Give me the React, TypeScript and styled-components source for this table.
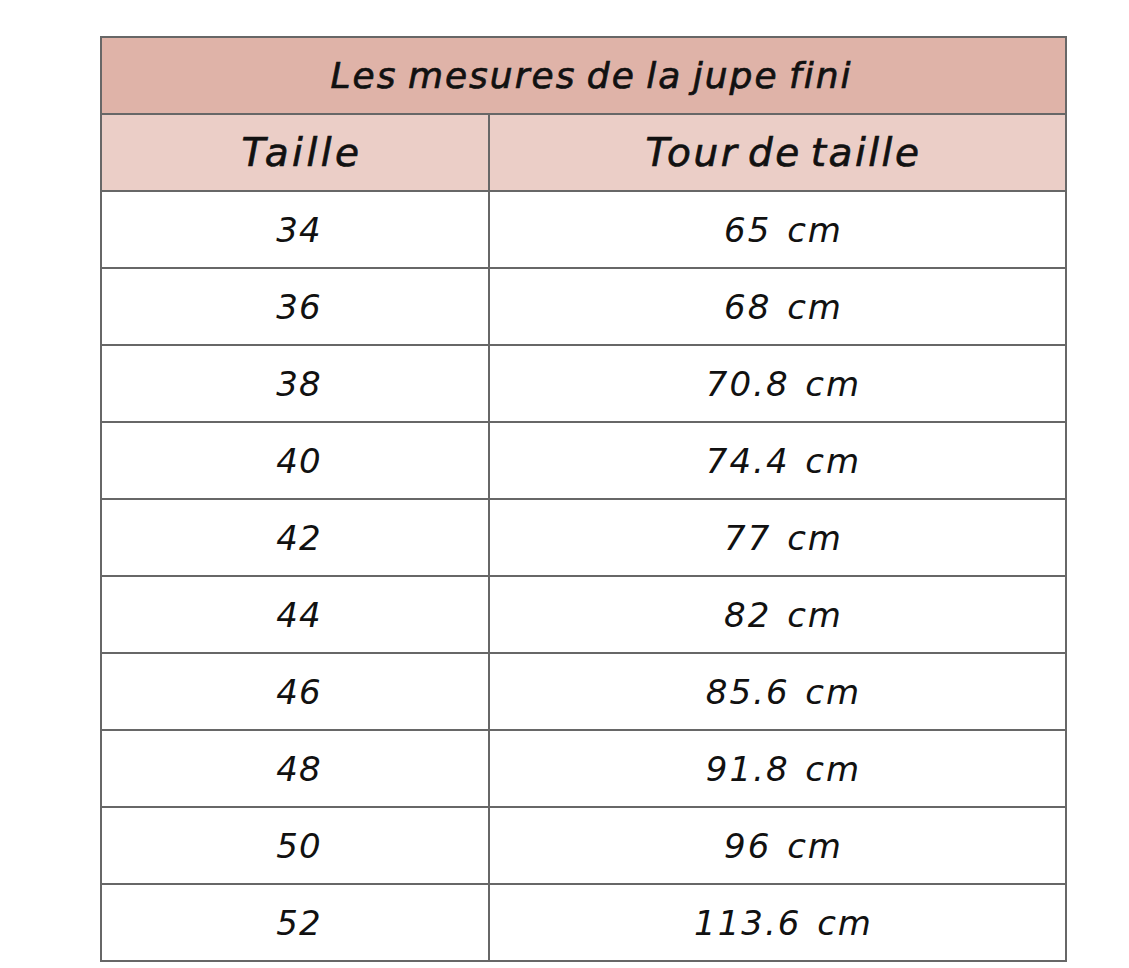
import React from "react";
import styled, { createGlobalStyle } from "styled-components";

const Global = createGlobalStyle`
  html, body { margin: 0; padding: 0; background: #ffffff; }
  body { font-family: "DejaVu Sans", sans-serif; }
`;

const Page = styled.div`
  width: 1129px;
  height: 968px;
  padding: 36px 0 0 100px;
  box-sizing: border-box;
  background: #ffffff;
`;

const Table = styled.table`
  border-collapse: collapse;
  width: 967px;
  table-layout: fixed;
  font-family: "DejaVu Sans", sans-serif;
  font-style: italic;
  color: #111111;
`;

const Cell = styled.td<{ $bg?: string; $size?: number; $stroke?: number; $spacing?: number; $word?: number; $pad?: number }>`
  border: 2px solid #676767;
  height: 75px;
  padding: 0 0 0 ${(p) => p.$pad ?? 12}px;
  text-align: center;
  vertical-align: middle;
  background: ${(p) => p.$bg || "#ffffff"};
  font-size: ${(p) => p.$size || 34}px;
  font-weight: 400;
  -webkit-text-stroke: ${(p) => p.$stroke ?? 0}px #111111;
  letter-spacing: ${(p) => p.$spacing ?? 1}px;
  word-spacing: ${(p) => p.$word ?? 0}px;
`;

const rows: [string, string][] = [
  ["34", "65 cm"],
  ["36", "68 cm"],
  ["38", "70.8 cm"],
  ["40", "74.4 cm"],
  ["42", "77 cm"],
  ["44", "82 cm"],
  ["46", "85.6 cm"],
  ["48", "91.8 cm"],
  ["50", "96 cm"],
  ["52", "113.6 cm"],
];

export default function App() {
  return (
    <Page>
      <Global />
      <Table>
        <colgroup>
          <col style={{ width: 388 }} />
          <col style={{ width: 577 }} />
        </colgroup>
        <tbody>
          <tr>
            <Cell colSpan={2} $bg="#dfb3a8" $size={36} $stroke={0.7} $spacing={2} $word={-3} $pad={16}>
              Les mesures de la jupe fini
            </Cell>
          </tr>
          <tr>
            <Cell $bg="#ebcec7" $size={39} $stroke={0.7} $spacing={3.5} $pad={14}>Taille</Cell>
            <Cell $bg="#ebcec7" $size={39} $stroke={0.7} $spacing={2.5} $word={-6}>Tour de taille</Cell>
          </tr>
          {rows.map(([t, v]) => (
            <tr key={t}>
              <Cell $spacing={1} $pad={8}>{t}</Cell>
              <Cell $spacing={2} $word={3}>{v}</Cell>
            </tr>
          ))}
        </tbody>
      </Table>
    </Page>
  );
}
